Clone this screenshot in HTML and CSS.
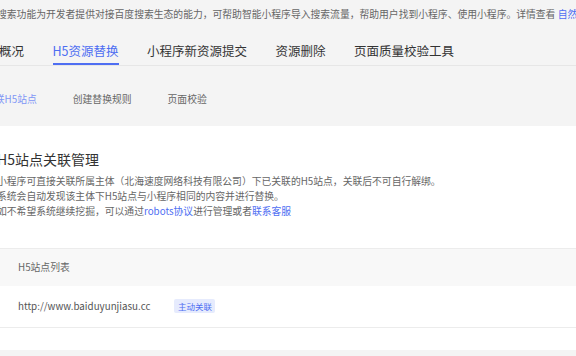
FILE: index.html
```html
<!DOCTYPE html>
<html lang="zh-CN">
<head>
<meta charset="utf-8">
<title>H5资源替换</title>
<link rel="stylesheet" href="styles.css">
</head>
<body>
<div class="page">
  <div class="intro">搜索功能为开发者提供对接百度搜索生态的能力，可帮助智能小程序导入搜索流量，帮助用户找到小程序、使用小程序。详情查看 <a class="link">自然搜索接入文档</a></div>
  <nav class="tabs">
    <span class="tab">概况</span>
    <span class="tab active">H5资源替换</span>
    <span class="tab">小程序新资源提交</span>
    <span class="tab">资源删除</span>
    <span class="tab">页面质量校验工具</span>
  </nav>
  <nav class="subtabs">
    <span class="subtab active">关联H5站点</span>
    <span class="subtab">创建替换规则</span>
    <span class="subtab">页面校验</span>
  </nav>
  <section class="card">
    <h2 class="title">H5站点关联管理</h2>
    <div class="desc">
      <p>小程序可直接关联所属主体（北海速度网络科技有限公司）下已关联的H5站点，关联后不可自行解绑。</p>
      <p>系统会自动发现该主体下H5站点与小程序相同的内容并进行替换。</p>
      <p>如不希望系统继续挖掘，可以通过<a class="link">robots协议</a>进行管理或者<a class="link">联系客服</a></p>
    </div>
    <div class="table">
      <div class="thead">H5站点列表</div>
      <div class="trow">
        <span class="url">http://www.baiduyunjiasu.cc</span>
        <span class="badge">主动关联</span>
      </div>
    </div>
  </section>
</div>
</body>
</html>
```

FILE: styles.css
```css
html, body {
  margin: 0;
  padding: 0;
}
body {
  background: #f4f4f4;
  font-family: "Noto Sans CJK SC", "Noto Sans", sans-serif;
  color: #333;
  overflow: hidden;
  width: 576px;
  height: 356px;
}
.page {
  margin-left: -3px;
  width: 640px;
}
.link {
  color: #4e6ef2;
  text-decoration: none;
}
.intro {
  height: 28px;
  line-height: 28px;
  font-size: 9.8px;
  color: #666;
  white-space: nowrap;
  overflow: hidden;
}
.tabs {
  display: flex;
  gap: 28.5px;
  padding-left: 2px;
  border-bottom: 1px solid #e6e6e6;
}
.tab {
  font-size: 12.5px;
  line-height: 18px;
  padding-top: 14px;
  padding-bottom: 3px;
  border-bottom: 2px solid transparent;
  color: #333;
  white-space: nowrap;
}
.tab.active {
  color: #4e6ef2;
  border-bottom-color: #4e6ef2;
}
.subtabs {
  display: flex;
  gap: 36px;
  margin-left: -12px;
  padding-top: 20px;
  padding-bottom: 14px;
  line-height: 26px;
  font-size: 9.8px;
  color: #666;
}
.subtab.active {
  color: #7f97f6;
}
.card {
  background: #fff;
  padding-top: 22px;
  padding-bottom: 22px;
}
.title {
  margin: 0;
  font-size: 14px;
  font-weight: normal;
  line-height: 22px;
  color: #333;
}
.desc {
  margin-top: 3.5px;
  font-size: 9.8px;
  line-height: 15px;
  color: #666;
}
.desc p {
  margin: 0;
}
.table {
  margin-top: 29px;
  border-top: 1px solid #ececec;
}
.thead {
  height: 37px;
  line-height: 37px;
  background: #f8f8f8;
  padding-left: 21px;
  font-size: 9.8px;
  color: #666;
}
.trow {
  display: flex;
  align-items: center;
  height: 41px;
  padding-left: 21px;
  border-bottom: 1px solid #ececec;
  font-size: 9.8px;
  color: #555;
}
.badge {
  margin-left: 24px;
  height: 14px;
  line-height: 14px;
  padding: 0 3.5px;
  font-size: 8.5px;
  color: #4e6ef2;
  background: #e6ebfd;
  border-radius: 2px;
}
```
